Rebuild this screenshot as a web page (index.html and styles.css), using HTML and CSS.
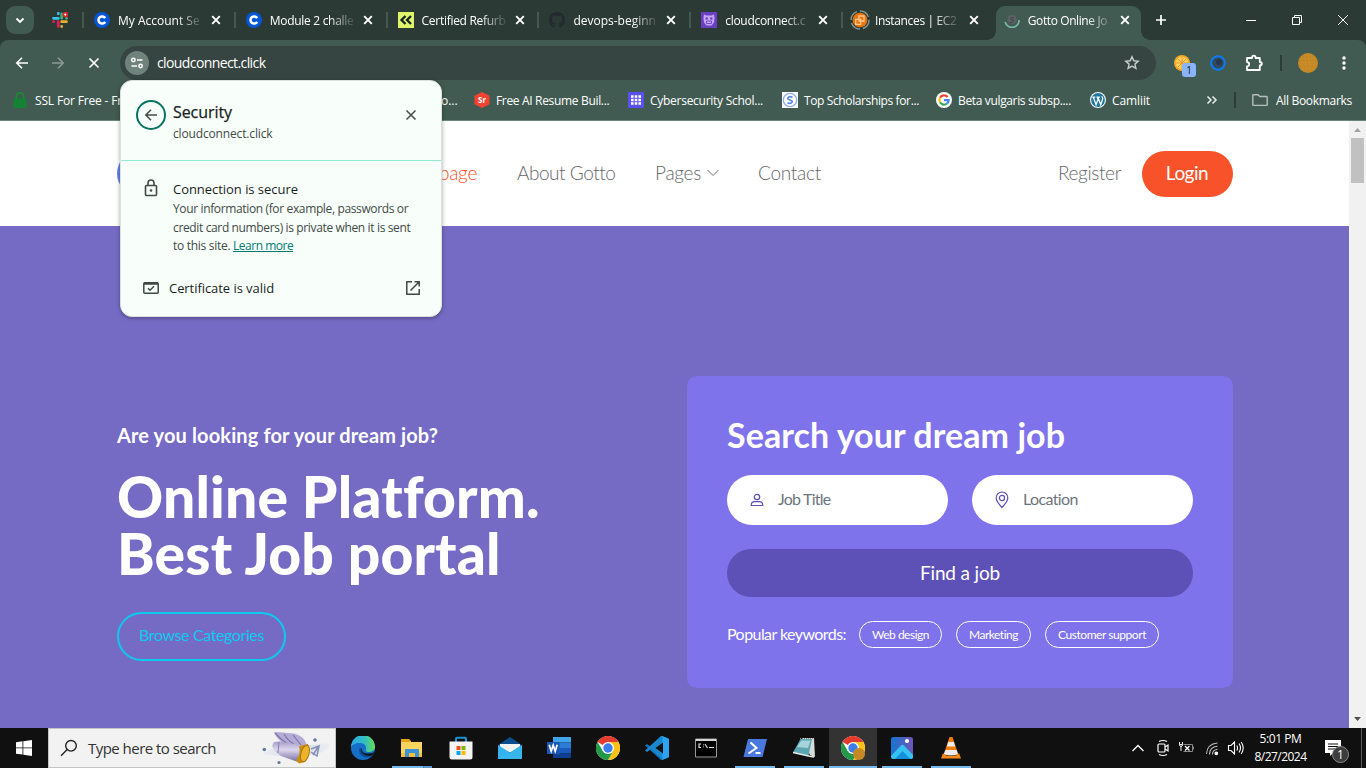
FILE: index.html
```html
<!DOCTYPE html>
<html lang="en">
<head>
<meta charset="utf-8">
<title>Gotto Online Job Portal</title>
<link rel="stylesheet" href="styles.css">
</head>
<body>
<svg class="defs" width="0" height="0">
  <defs>
    <symbol id="x" viewBox="0 0 12 12"><path d="M2.2 2.2l7.6 7.6M9.8 2.2L2.2 9.8" fill="none" stroke="currentColor" stroke-width="1.9"/></symbol>
    <symbol id="coursera" viewBox="0 0 16 16"><circle cx="8" cy="8" r="8" fill="#0556d6"/><path d="M11.2 6.2A3.6 3.6 0 1 0 11.2 9.8" fill="none" stroke="#fff" stroke-width="2.5"/></symbol>
    <symbol id="chrome" viewBox="0 0 24 24">
      <circle cx="12" cy="12" r="12" fill="#fff"/>
      <path d="M12 12L1.6 6A12 12 0 0 1 22.4 6z" fill="#e33b2e"/>
      <path d="M22.4 6A12 12 0 0 1 12 24L17.2 15 12 6z" fill="#fbc116"/>
      <path d="M1.6 6A12 12 0 0 0 12 24L17.2 15 6.8 15z" fill="#229a48"/>
      <circle cx="12" cy="12" r="6" fill="#fff"/><circle cx="12" cy="12" r="4.7" fill="#3b7ded"/>
    </symbol>
  </defs>
</svg>

<header class="tabstrip">
  <button class="tab-search"><svg width="12" height="12" viewBox="0 0 12 12"><path d="M2.5 4.5L6 8l3.500-3.500" fill="none" stroke="#fff" stroke-width="1.8"/></svg></button>
  <div class="pinned">
    <svg width="16" height="16" viewBox="0 0 16 16" fill="none" stroke-width="2.800" stroke-linecap="round">
      <path d="M6.300 1.500v.2M1.500 6.300h4.800" stroke="#36c5f0"/><path d="M9.700 2v4.200" stroke="#2eb67d"/><path d="M14.400 6.300h.1" stroke="#2eb67d"/>
      <path d="M9.700 9.700h4.700M9.700 14.400v.1" stroke="#ecb22e"/><path d="M6.300 9.700v4.700M1.500 9.700h.2" stroke="#e01e5a"/>
      <circle cx="13.300" cy="2.600" r="2" fill="#fff" stroke="#e0202a" stroke-width="1.800"/>
    </svg>
  </div>
  <div class="tab"><svg class="fav"><use href="#coursera"/></svg><span class="tab-title">My Account Se</span><svg class="close"><use href="#x"/></svg></div>
  <div class="tab"><svg class="fav"><use href="#coursera"/></svg><span class="tab-title t-mod">Module 2 challe</span><svg class="close"><use href="#x"/></svg></div>
  <div class="tab"><svg class="fav" viewBox="0 0 16 16"><path fill="#dff36b" d="M0 0h16v16H0z"/><path d="M7.500 4L3.500 8l4 4M13 4L9 8l4 4" fill="none" stroke="#17202b" stroke-width="2.300"/></svg><span class="tab-title tight">Certified Refurb</span><svg class="close"><use href="#x"/></svg></div>
  <div class="tab"><svg class="fav" viewBox="0 0 16 16"><path fill="#24292f" d="M8 0C3.580 0 0 3.580 0 8c0 3.540 2.290 6.530 5.470 7.590.4.070.55-.17.55-.38v-1.490c-2.010.37-2.530-.49-2.690-.94-.09-.23-.48-.94-.82-1.130-.28-.15-.68-.52-.01-.53.63-.01 1.080.58 1.230.82.72 1.210 1.870.87 2.330.66.07-.52.28-.87.51-1.070-1.780-.2-3.640-.89-3.640-3.950 0-.87.310-1.590.82-2.150-.08-.2-.36-1.020.08-2.120 0 0 .67-.21 2.200.82a7.400 7.400 0 0 1 4 0c1.530-1.040 2.200-.82 2.200-.82.44 1.100.16 1.920.08 2.120.51.56.82 1.270.82 2.150 0 3.070-1.870 3.750-3.650 3.950.29.25.54.73.54 1.480v2.200c0 .21.15.46.55.38A8 8 0 0 0 16 8c0-4.420-3.580-8-8-8z"/></svg><span class="tab-title">devops-beginn</span><svg class="close"><use href="#x"/></svg></div>
  <div class="tab"><svg class="fav" viewBox="0 0 16 16"><path fill="#6b3fc4" d="M0 0h16v16H0z"/><path fill="#c5a6f5" d="M3 2.500l2.500 1h5l2.500-1 .5 3.500-.5 4.500-2.500 3h-5l-2.500-3L2.500 6z"/><circle cx="5.700" cy="6.500" r="1.200" fill="#6b3fc4"/><circle cx="10.300" cy="6.500" r="1.200" fill="#6b3fc4"/><path d="M5.500 9h5v2.500h-5z" fill="none" stroke="#6b3fc4" stroke-width=".9"/></svg><span class="tab-title tight">cloudconnect.c</span><svg class="close"><use href="#x"/></svg></div>
  <div class="tab"><svg class="fav big" viewBox="0 0 20 20"><circle cx="10" cy="10" r="9" fill="none" stroke="#8b9892" stroke-width="1.400" stroke-dasharray="11 3"/><circle cx="10" cy="10" r="7.300" fill="#e8760c"/><path d="M5.700 9.300h5v5h-5zM9 6h5v5H9z" fill="none" stroke="#ffc68f" stroke-width="1.300"/></svg><span class="tab-title t-ec2">Instances | EC2</span><svg class="close"><use href="#x"/></svg></div>
  <div class="tab active"><svg class="fav" viewBox="0 0 16 16"><circle cx="8" cy="7.500" r="4.500" fill="#5b6262"/><path d="M10 6q-2-1.500-3 0t1 1.500 1 2-3 .5" fill="none" stroke="#3b4446"/><path d="M15 8A7 7 0 0 1 1.200 10" fill="none" stroke="#79b8a6" stroke-width="1.700"/></svg><span class="tab-title t-gotto">Gotto Online Jo</span><svg class="close"><use href="#x"/></svg></div>
  <svg class="newtab" viewBox="0 0 12 12"><path d="M6 1v10M1 6h10" stroke="#fff" stroke-width="1.700"/></svg>
  <div class="winctl">
    <svg width="12" height="12" viewBox="0 0 12 12"><path d="M1 6.500h10" stroke="#fff"/></svg>
    <svg width="12" height="12" viewBox="0 0 12 12"><path d="M1.500 3.500h7v7h-7zM3.500 3.500v-2h7v7h-2" fill="none" stroke="#fff"/></svg>
    <svg width="12" height="12" viewBox="0 0 12 12"><path d="M1 1l10 10M11 1L1 11" stroke="#fff"/></svg>
  </div>
</header>

<div class="toolbar">
  <div class="navbtns">
    <svg width="16" height="16" viewBox="0 0 16 16"><path d="M14 8H3M8 2.800L2.800 8 8 13.200" fill="none" stroke="#fff" stroke-width="1.600"/></svg>
    <svg width="16" height="16" viewBox="0 0 16 16"><path d="M2 8h11M8 2.800L13.200 8 8 13.200" fill="none" stroke="#8b9a94" stroke-width="1.600"/></svg>
    <svg width="16" height="16" viewBox="0 0 16 16"><path d="M3.500 3.500l9 9M12.500 3.500l-9 9" stroke="#fff" stroke-width="1.700"/></svg>
  </div>
  <div class="omnibox">
    <span class="siteinfo"><svg width="14" height="14" viewBox="0 0 14 14" fill="none" stroke="#fff" stroke-width="1.500"><circle cx="3.400" cy="4" r="1.700"/><path d="M7 4h5.500M1.500 10H7"/><circle cx="10.600" cy="10" r="1.700"/></svg></span>
    <span class="url">cloudconnect.click</span>
    <svg class="star" viewBox="0 0 16 16"><path d="M8 1.800l1.800 4 4.400.4-3.300 2.900 1 4.300L8 11.100l-3.900 2.300 1-4.300-3.300-2.900 4.400-.4z" fill="none" stroke="#c5cfcb" stroke-width="1.400"/></svg>
  </div>
  <div class="exts">
    <span class="ext-orange">
      <svg width="16" height="16" viewBox="0 0 16 16"><circle cx="8" cy="8" r="8" fill="#f5a623"/><circle cx="8" cy="8" r="6.300" fill="#ffd35c"/><path d="M8 2v12M2 8h12M3.700 3.700l8.600 8.600M12.300 3.700l-8.600 8.600" stroke="#f0972a"/></svg>
      <b class="badge">1</b>
    </span>
    <svg width="16" height="16" viewBox="0 0 16 16"><circle cx="8" cy="8" r="6.800" fill="#34495f" stroke="#0a7cf2" stroke-width="2"/><circle cx="9" cy="7" r="3" fill="#26384b"/></svg>
    <svg width="18" height="18" viewBox="0 0 18 18"><path d="M2 4h5q0-2.300 1.800-2.300T10.600 4h4.200v4q2 .1 2 1.700t-2 1.700V16H2v-3.500q2.200-.3 2.200-2.200T2 8z" fill="none" stroke="#fff" stroke-width="1.800" stroke-linejoin="round"/></svg>
    <i class="sep"></i>
    <svg class="avatar" viewBox="0 0 20 20"><circle cx="10" cy="10" r="10" fill="#c58926"/><path d="M4 6h12M2 9h15M3 12h14M5 15h10" stroke="#d2962f" stroke-dasharray="1 2"/><path d="M4 4.500h11M1 7.500h17M2 13.500h15" stroke="#b57d22" stroke-dasharray="1 3"/></svg>
    <svg width="4" height="16" viewBox="0 0 4 16" fill="#fff"><circle cx="2" cy="3" r="1.700"/><circle cx="2" cy="8" r="1.700"/><circle cx="2" cy="13" r="1.700"/></svg>
  </div>
</div>

<div class="bookmarks">
  <span class="bm bm-ssl"><svg viewBox="0 0 14 16"><path d="M3.300 7V4.500a3.700 3.700 0 0 1 7.400 0V7" fill="none" stroke="#1a8a34" stroke-width="1.800"/><rect x=".6" y="6.500" width="12.800" height="9.500" rx="1.200" fill="#148233"/></svg><span>SSL For Free - Fre</span></span>
  <span class="bm-tail">o...</span>
  <span class="bm bm-resume"><svg viewBox="0 0 16 16"><path d="M8 0l7.500 3.800v8.400L8 16 .5 12.200V3.800z" fill="#f1432f"/><text x="8" y="10.500" class="g-sr">Sr</text></svg><span>Free AI Resume Buil...</span></span>
  <span class="bm bm-cyber"><svg viewBox="0 0 16 16"><path fill="#5a4ff3" d="M0 0h16v16H0z"/><path d="M3 4.500h10M3 8h10M3 11.500h10" stroke="#fff" stroke-width="2.600" stroke-dasharray="2.600 1.100"/></svg><span>Cybersecurity Schol...</span></span>
  <span class="bm bm-top"><svg viewBox="0 0 16 16"><path fill="#fff" d="M0 0h16v16H0z"/><circle cx="8" cy="8" r="6.700" fill="none" stroke="#8fadf0" stroke-width="1.300"/><path d="M10.500 5.500Q8 3.800 6.300 5.300T8 8t1.700 2.600-4.200.2" fill="none" stroke="#5b86e8" stroke-width="1.700"/></svg><span>Top Scholarships for...</span></span>
  <span class="bm bm-beta"><svg viewBox="0 0 16 16"><circle cx="8" cy="8" r="8" fill="#fff"/><g fill="none" stroke-width="2.200"><path d="M11.600 5A4.600 4.600 0 0 0 4 5.700" stroke="#ea4335"/><path d="M4 5.700a4.600 4.600 0 0 0 0 4.600" stroke="#fbbc05"/><path d="M4 10.300a4.600 4.600 0 0 0 7 1.200" stroke="#34a853"/><path d="M11 11.500a4.600 4.600 0 0 0 1.600-3.300H8" stroke="#4285f4"/></g></svg><span>Beta vulgaris subsp....</span></span>
  <span class="bm bm-caml"><svg viewBox="0 0 16 16"><circle cx="8" cy="8" r="8" fill="#f4fafd"/><circle cx="8" cy="8" r="6.900" fill="#21759b"/><path d="M2.300 5.200h3M6.500 5.200h3.500M3.300 5.200l2.800 7.600L8 7.300 7.300 5.200M8 5.200l2.700 7.600 2-6q.2-1.500-1-2.600" fill="none" stroke="#fff" stroke-width="1.200"/></svg><span>Camliit</span></span>
  <svg class="more" viewBox="0 0 12 12"><path d="M1.500 2.500L5 6 1.500 9.500M6.500 2.500L10 6 6.500 9.500" fill="none" stroke="#e8efec" stroke-width="1.500"/></svg>
  <i class="sep bm-sep"></i>
  <span class="bm bm-all"><svg viewBox="0 0 16 16"><path d="M.8 12.800V3.300q0-.6.600-.6h4.800l1.600 1.800h6.800q.6 0 .6.600v7.700q0 .6-.6.600H1.400q-.6 0-.6-.6z" fill="none" stroke="#b4bfba" stroke-width="1.400"/></svg><span>All Bookmarks</span></span>
</div>

<main class="viewport">
  <div class="site">
    <nav class="sitenav">
      <i class="logo"></i>
      <span class="home">Homepage</span>
      <span class="n-about">About Gotto</span>
      <span class="n-pages">Pages<svg width="14" height="10" viewBox="0 0 14 10"><path d="M1.500 2L7 7.500 12.500 2" fill="none" stroke="#717275" stroke-width="1"/></svg></span>
      <span class="n-contact">Contact</span>
      <span class="register">Register</span>
      <span class="login">Login</span>
    </nav>
    <section class="hero">
      <div class="intro">
        <h6>Are you looking for your dream job?</h6>
        <h1><span>Online Platform.</span><br><span>Best Job portal</span></h1>
        <span class="browse">Browse Categories</span>
      </div>
      <form class="card">
        <h2>Search your dream job</h2>
        <div class="fields">
          <div class="field"><svg width="14" height="16" viewBox="0 0 14 16" fill="none" stroke="#5b4fb8" stroke-width="1.200"><circle cx="7" cy="5" r="2.700"/><path d="M1.200 13.500q0-3.800 3.600-3.800h4.400q3.600 0 3.600 3.800z"/></svg><span class="f-job">Job Title</span></div>
          <div class="field"><svg width="14" height="18" viewBox="0 0 14 18" fill="none" stroke="#5b4fb8" stroke-width="1.200"><path d="M7 16.500Q1.200 10.500 1.200 6.800a5.800 5.800 0 0 1 11.600 0Q12.800 10.500 7 16.500z"/><circle cx="7" cy="7" r="2.600"/></svg><span class="f-loc">Location</span></div>
        </div>
        <div class="find">Find a job</div>
        <div class="keywords"><span class="kw">Popular keywords:</span><span class="chip c1">Web design</span><span class="chip c2">Marketing</span><span class="chip c3">Customer support</span></div>
      </form>
    </section>
  </div>
  <div class="scrollbar">
    <svg width="17" height="17" viewBox="0 0 17 17"><path d="M5 11h7L8.500 7z" fill="#a3a3a3"/></svg>
    <i class="thumb"></i>
    <svg class="down" width="17" height="17" viewBox="0 0 17 17"><path d="M5 6h7l-3.500 4z" fill="#505050"/></svg>
  </div>
</main>

<footer class="taskbar">
  <span class="start"><svg width="16" height="16" viewBox="0 0 16 16" fill="#fff"><path d="M0 2.200L6.500 1.300V7.500H0zM7.300 1.200L16 0v7.500H7.300zM0 8.300h6.500v6.300L0 13.800zM7.300 8.300H16V16l-8.700-1.200z"/></svg></span>
  <div class="search">
    <svg width="18" height="18" viewBox="0 0 18 18" fill="none" stroke="#222" stroke-width="1.400"><circle cx="11" cy="6.800" r="5.300"/><path d="M7.200 10.600L1 16.800"/></svg>
    <span>Type here to search</span>
    <svg class="scope" width="72" height="38" viewBox="0 0 72 38">
      <defs>
        <linearGradient id="tube" x1="0" y1="0" x2="0" y2="1"><stop offset="0" stop-color="#a79dcb"/><stop offset=".4" stop-color="#dcd6ee"/><stop offset="1" stop-color="#776c9f"/></linearGradient>
        <linearGradient id="haze" x1="0" x2="1"><stop offset="0" stop-color="#d3e1ef" stop-opacity=".2"/><stop offset=".5" stop-color="#c3d6ea"/><stop offset="1" stop-color="#d3e1ef" stop-opacity=".2"/></linearGradient>
      </defs>
      <path d="M0 25q14-10 30-7l38-4q-2 11-22 12L18 27z" fill="url(#haze)"/>
      <path d="M12 3q7 0 13 1 9 0 13 3 6 3 7 11l-7 1-15-4Q15 11 12 3z" fill="#b5acd6"/><path d="M13 4q6 7 13 11M22 5q4 7 10 10M31 6q4 5 8 10" fill="none" stroke="#7d73ab" stroke-width="1.200"/>
      <path d="M10 17l2-4 5-.5 22 3.500-3 17-17-6-6-5z" fill="url(#tube)"/><path d="M17 13l-1 11" stroke="#8a80b3"/>
      <path d="M37 17l9-2q4 7-3 18l-6 1.500-3-3q5-6 3-14.500z" fill="#c98f12"/><ellipse cx="43" cy="24.500" rx="4" ry="8.500" transform="rotate(16 43 24.500)" fill="#edb42a" stroke="#a8740d"/>
      <path d="M49 20l8-3-2 10-6-4M51 26l5-8" fill="none" stroke="#8590b2" stroke-width="1.500"/>
      <g fill="#62789a"><circle cx="2.300" cy="20.500" r="1.800"/><circle cx="17" cy="33.500" r="1.600"/><circle cx="53" cy="11" r="1.800"/></g>
    </svg>
  </div>
  <div class="apps">
    <span class="app"><svg viewBox="0 0 24 24"><defs><linearGradient id="e1" x1="0" x2="1"><stop offset="0" stop-color="#2aa7ee"/><stop offset=".6" stop-color="#35c1b8"/><stop offset="1" stop-color="#67dc55"/></linearGradient></defs><circle cx="12" cy="12" r="12" fill="#1470c8"/><path d="M0 11A12 12 0 0 1 24 11c0 5-8 6.500-9.500 3.500 2-4-1-7.500-5.500-7.500C4 7 1 9 0 11z" fill="url(#e1)"/><path d="M8.500 12.500q-1.500 5 3.500 8t10-2.500q-4 2-8 0t-3.500-6z" fill="#0b4b91"/><path d="M10.500 12q0 5 5 5.500 5 .5 8-1.500l-2.500 3.500q-6 1-9-2t-1.500-5.500z" fill="#101010"/></svg></span>
    <span class="app open double"><svg viewBox="0 0 24 24"><path d="M1 3h8l2 2v3H1z" fill="#e8a41d"/><path d="M1 6h21v14H1z" fill="#ffd45f"/><path d="M1 17h21v4H1z" fill="#f7bd3a"/><path d="M5 13h14v8h-4v-4H9v4H5z" fill="#3a93d5"/></svg></span>
    <span class="app"><svg viewBox="0 0 24 24"><path d="M7 6V2.800q0-1 1-1h8q1 0 1 1V6" fill="none" stroke="#1795d4" stroke-width="2"/><path d="M.5 5.500h23V21q0 2.500-2.500 2.500H3Q.5 23.500.5 21z" fill="#f4f4f4"/><path d="M7.500 10h4v4h-4z" fill="#f25022"/><path d="M12.500 10h4v4h-4z" fill="#7fba00"/><path d="M7.500 15h4v4h-4z" fill="#00a4ef"/><path d="M12.500 15h4v4h-4z" fill="#ffb900"/></svg></span>
    <span class="app"><svg viewBox="0 0 24 24"><path d="M0 9l12-8 12 8v3H0z" fill="#0b4d8e"/><path d="M2 8h20v8H2z" fill="#f2f2f2"/><path d="M0 9l12 7.500L24 9v14H0z" fill="#35b3ee"/><path d="M24 9v14H2z" fill="#2a9de0"/><path d="M0 23L12 16.500 24 9v14z" fill="#41c4f5" opacity=".6"/></svg></span>
    <span class="app"><svg viewBox="0 0 24 24"><path d="M6 1h18v5.500H6z" fill="#41a5ee"/><path d="M6 6.500h18V12H6z" fill="#2b7cd3"/><path d="M6 12h18v5.500H6z" fill="#185abd"/><path d="M6 17.500h18V22H6z" fill="#103f91"/><path d="M0 6h12.500v12H0z" fill="#1d57b5"/><path d="M2.200 8.700l2 6.500 2-6 2 6 2-6.500" fill="none" stroke="#fff" stroke-width="1.700"/></svg></span>
    <span class="app"><svg><use href="#chrome"/></svg></span>
    <span class="app"><svg viewBox="0 0 24 24"><path d="M18 0L6 11 2 8 0 9.500 16 24h2z" fill="#1173b8"/><path d="M18 24L6 13l-4 3-2-1.500L16 0h2z" fill="#1a88cf"/><path d="M17.500 0L24 2.800v18.400L17.500 24z" fill="#2ba3f0"/><path d="M18 6.500v11L10.500 12z" fill="#101010"/></svg></span>
    <span class="app"><svg viewBox="0 0 24 24"><path d="M1.500 3h21v18h-21z" fill="#000" stroke="#9a9a9a"/><path d="M2 3h20v2H2z" fill="#d5d5d5"/><path d="M7 8H5v3.500h2M9.500 8.500v.8M9.500 10.500v.8M11 8l2.500 4M15 11.500h5" fill="none" stroke="#e8e8e8" stroke-width="1.100"/></svg></span>
    <span class="app open"><svg viewBox="0 0 24 24"><path d="M5 3h19l-4.500 18H.5z" fill="#4a78dc"/><path d="M7.500 6.500l6 5.500-8 5.500M12.500 17h5" fill="none" stroke="#fff" stroke-width="2"/></svg></span>
    <span class="app open"><svg viewBox="0 0 24 24"><path d="M10 2h12l1 19-5-2z" fill="#d8dcd6"/><path d="M8.500 3H20l-3.500 17L1 16.500z" fill="#5ba6b3"/><path d="M9.500 4.500h9L16 12 5 11z" fill="#a7d4da"/><path d="M1 16.500L16.500 20l5.500 1" fill="none" stroke="#e6ebe8" stroke-width="1.500"/><path d="M8 2.500h14" stroke="#8e8e82" stroke-dasharray="1 1"/></svg></span>
    <span class="app open current"><svg><use href="#chrome"/></svg><i class="profile"></i></span>
    <span class="app open"><svg viewBox="0 0 24 24"><defs><linearGradient id="ph" x1="0" x2="1"><stop offset="0" stop-color="#1675d1"/><stop offset="1" stop-color="#6f55b7"/></linearGradient></defs><rect x="1" y="1" width="22" height="22" rx="2.500" fill="url(#ph)"/><path d="M1 20L11 9.500q1.500-1.500 3 0l9 9.500V21q0 2-2 2H3.500Q1 23 1 20z" fill="#36c3f2"/><path d="M12.500 15l8 8H5z" fill="#1491de"/><circle cx="17" cy="5" r="2" fill="#fff"/></svg></span>
    <span class="app open"><svg viewBox="0 0 24 24"><path d="M10.500 1h3l6 18h-15z" fill="#f27c0a"/><path d="M9.200 6h5.600l1.400 4.500H7.800zM6.400 14h11.200l1.300 4q-7 3-14 0z" fill="#ededed"/><path d="M4 17l-2 5.500h20L20 17q-1 3-8 3t-8-3z" fill="#f58a18"/></svg></span>
  </div>
  <div class="tray">
    <svg width="14" height="10" viewBox="0 0 14 10"><path d="M1.500 8L7 2.500 12.500 8" fill="none" stroke="#fff" stroke-width="1.300"/></svg>
    <svg class="t-meet" width="14" height="18" viewBox="0 0 14 18" fill="none" stroke="#fff" stroke-width="1.200"><rect x="2" y="5" width="7" height="8" rx="1"/><path d="M9 8l3-2v6L9 10M3 2.500Q7 .5 11 2.500M3 15.500q4 2 8 0"/></svg>
    <svg class="t-bat" width="17" height="14" viewBox="0 0 17 14" fill="none" stroke="#eee"><path d="M1.500 1v2.500h3V1M1.500 3.500q0 2 1.500 2t1.500-2M3 5.500V10"/><path d="M5.500 3.500h9v7h-9M15.500 5.500v3" stroke="#888"/><path d="M7 5l4.500 4.500M11.500 5L7 9.500" stroke="#fff" stroke-width="1.300"/></svg>
    <svg class="t-wifi" width="15" height="15" viewBox="0 0 15 15" fill="none" stroke="#bbb" stroke-width="1.100"><path d="M1.500 13Q2 3 12.500 2M4.500 13.500Q4.500 6 12.500 5.300M7.500 13.500q0-4.500 5-5.200"/><circle cx="11.300" cy="12.300" r="1.300" fill="#fff" stroke="#fff"/></svg>
    <svg class="t-vol" width="18" height="16" viewBox="0 0 18 16" fill="none" stroke="#fff" stroke-width="1.100"><path d="M1.500 5.500H4L7.500 2v12L4 10.500H1.500zM9.800 5.500q1.500 2.500 0 5M12 3.500q3 4.500 0 9M14.200 2q4 6 0 12"/></svg>
    <div class="clock"><span class="c-time">5:01 PM</span><span class="c-date">8/27/2024</span></div>
    <span class="notif"><svg width="16" height="16" viewBox="0 0 16 16"><path d="M0 0h16v13H8l-3 3v-3H0z" fill="#fff"/><path d="M3 4h10M3 6.500h10M3 9h7" stroke="#111" stroke-width="1.100"/></svg><b>1</b></span>
    <i class="peek"></i>
  </div>
</footer>

<aside class="popup">
  <div class="p-head">
    <span class="p-back"><svg width="14" height="14" viewBox="0 0 14 14"><path d="M13 7H2M7 1.800L1.800 7 7 12.200" fill="none" stroke="#444b48" stroke-width="1.500"/></svg></span>
    <div class="p-titles"><span class="p-title">Security</span><span class="p-host">cloudconnect.click</span></div>
    <svg class="p-x" viewBox="0 0 12 12"><path d="M1.500 1.500l9 9M10.500 1.500l-9 9" stroke="#444b48" stroke-width="1.500"/></svg>
  </div>
  <div class="p-body">
    <svg class="p-lock" width="14" height="18" viewBox="0 0 14 18" fill="none" stroke="#3f4845" stroke-width="1.600"><rect x="1.500" y="6.500" width="11" height="10" rx="1"/><path d="M4 6.500V4a3 3 0 0 1 6 0v2.500"/><circle cx="7" cy="11.500" r="1.300" fill="#3f4845" stroke="none"/></svg>
    <div class="p-text"><span class="p-conn">Connection is secure</span><span>Your information (for example, passwords or</span><span>credit card numbers) is private when it is sent</span><span class="p-last">to this site. <a>Learn more</a></span></div>
  </div>
  <div class="p-cert">
    <svg width="16" height="14" viewBox="0 0 16 14" fill="none" stroke="#3f4845" stroke-width="1.500"><rect x=".8" y="1.800" width="14.400" height="10.500" rx="1"/><path d="M1 2.500h14" stroke-width="2.500"/><path d="M5 7.300l2 2 4-4"/></svg>
    <span>Certificate is valid</span>
    <svg class="p-out" width="16" height="16" viewBox="0 0 16 16" fill="none" stroke="#3f4845" stroke-width="1.500"><path d="M7 1.800H1.800v12.400h12.400V9M9.500 1.800h4.700v4.700M14 2L5.500 10.500"/></svg>
  </div>
</aside>
</body>
</html>
```
FILE: styles.css
```css
* { box-sizing: border-box; }
html, body { height: 100%; }
body {
  margin: 0; width: 1366px; height: 768px; overflow: hidden;
  display: flex; flex-direction: column;
  font-family: "Open Sans", "Noto Sans", sans-serif; font-size: 12px; color: #fff;
  background: #2b3a35; position: relative; white-space: nowrap;
}
svg { flex: none; display: block; }
.defs { position: absolute; }
h1, h2, h6 { margin: 0; }

/* tab strip */
.tabstrip { height: 40px; display: flex; align-items: center; padding-left: 6px; flex: none; }
.tab-search { width: 28px; height: 28px; border: 0; padding: 0; border-radius: 9px; background: #425b52; display: flex; align-items: center; justify-content: center; }
.pinned { width: 48px; padding-left: 18px; }
.tab { width: 151.8px; height: 34px; display: flex; align-items: center; padding-left: 10px; position: relative; }
.tab::before { content: ""; width: 2px; height: 16px; background: #43594f; margin-left: -10px; margin-right: 10px; }
.fav { width: 16px; height: 16px; margin-right: 8px; }
.tab-title { width: 84px; -webkit-mask-image: linear-gradient(90deg, #000 70%, rgba(0,0,0,.15) 98%); mask-image: linear-gradient(90deg, #000 70%, rgba(0,0,0,.15) 98%); }
.tab-title.tight { letter-spacing: -.29px; }
.tab-title.t-mod { letter-spacing: -.3px; }
.tab-title.t-ec2 { letter-spacing: -.35px; }
.tab-title.t-gotto { letter-spacing: -.4px; }
.close { width: 12px; height: 12px; margin-left: 8px; color: #fff; }
.fav.big { width: 20px; height: 20px; margin: 0 5px 0 -3px; }
.tab.active { width: 145px; height: 34px; margin: 6px 0 0 3px; padding: 0 0 6px 8px; background: #425b52; border-radius: 9px 9px 0 0; }
.fav.big ~ .close { margin-left: 9px; }
.tab.active::before { display: none; }
.tab.active .close { margin-left: 7px; }
.tab.active::after {
  content: ""; position: absolute; left: -9px; right: -9px; bottom: 0; height: 9px;
  background:
    radial-gradient(circle at 0 0, transparent 8.5px, #425b52 9px) left / 9px 9px no-repeat,
    radial-gradient(circle at 100% 0, transparent 8.5px, #425b52 9px) right / 9px 9px no-repeat;
}
.newtab { width: 12px; height: 12px; margin-left: 14px; }
.winctl { margin-left: auto; padding-right: 17px; display: flex; gap: 34px; }

/* toolbar */
.toolbar { height: 40px; flex: none; background: #425b52; border-radius: 8px 8px 0 0; display: flex; align-items: center; }
.navbtns { width: 120px; display: flex; gap: 20px; padding: 6px 0 0 14px; }
.omnibox { width: 1036px; height: 34px; margin-top: 6px; border-radius: 17px; background: #364541; display: flex; align-items: center; padding: 0 16px 0 5px; }
.siteinfo { width: 24px; height: 24px; border-radius: 50%; background: #6f837c; display: flex; align-items: center; justify-content: center; }
.url { font-size: 14px; letter-spacing: -.6px; margin-left: 8px; padding-bottom: 1px; flex: 1; }
.star { width: 16px; height: 16px; }
.exts { display: flex; align-items: center; padding: 6px 0 0 18px; flex: 1; }
.ext-orange { position: relative; margin-right: 20px; }
.badge { position: absolute; left: 8px; top: 8px; width: 14px; height: 14px; border-radius: 3px; background: #8ab4f8; color: #202124; font-size: 10px; font-weight: 400; line-height: 14px; text-align: center; }
.exts > svg:nth-of-type(1) { margin-right: 19px; }
.sep { width: 2px; height: 16px; background: #2c3c37; }
.exts .sep { margin: 0 16px 0 17px; }
.exts .avatar { width: 20px; height: 20px; margin-right: 24px; }

/* bookmarks */
.bookmarks { height: 41px; flex: none; background: #425b52; border-bottom: 1px solid #6c8479; display: flex; align-items: center; padding-left: 13px; letter-spacing: -.33px; }
.bm { display: flex; align-items: center; gap: 6px; }
.bm svg { width: 16px; height: 16px; }
.bm-ssl { width: 428px; gap: 8px; letter-spacing: -.16px; }
.bm-ssl svg { width: 14px; }
.bm-tail { width: 33px; letter-spacing: 0; }
.bm-resume { width: 154px; }
.bm-cyber { width: 154px; letter-spacing: -.27px; }
.bm-top { width: 154px; letter-spacing: -.38px; }
.bm-beta { width: 154px; letter-spacing: -.35px; }
.bm-caml { width: 116px; letter-spacing: -.1px; }
.more { width: 12px; height: 12px; }
.bm-sep { margin: 0 16px; }
.bm-all { gap: 8px; letter-spacing: -.31px; }
.g-sr { font: 700 8px "Open Sans", sans-serif; fill: #fff; text-anchor: middle; letter-spacing: 0; }

/* page */
.viewport { height: 607px; display: flex; flex: none; }
.site { width: 1349px; font-family: Lato, sans-serif; }
.sitenav { height: 105px; background: #fff; color: #66676a; font-weight: 300; font-size: 19px; line-height: 24px; display: flex; align-items: center; padding: 0 116px 0 117px; }
.sitenav > span:not(.login) { padding-bottom: 2px; }
.logo { width: 45px; height: 45px; border-radius: 50%; background: linear-gradient(135deg, #5f86f2, #7a6be0); }
.home { width: 315px; text-align: right; color: #f65129; letter-spacing: -.3px; }
.n-about { width: 138px; margin-left: 40px; letter-spacing: -.45px; }
.n-pages { width: 103px; display: flex; align-items: center; gap: 5px; letter-spacing: -.28px; }
.n-contact { letter-spacing: -.25px; }
.register { margin-left: auto; margin-right: 21px; letter-spacing: -.37px; }
.login { width: 91px; height: 46px; border-radius: 23px; background: #f8522a; color: #fff; text-align: center; line-height: 44px; font-weight: 400; letter-spacing: -.5px; padding-right: 1px; }
.hero { height: 502px; background: #766bc4; display: flex; justify-content: space-between; padding: 150px 116px 0 117px; }
.intro { padding-top: 46px; }
h6 { font-size: 20px; line-height: 26px; letter-spacing: .13px; }
h1 { font-size: 57px; line-height: 57px; font-weight: 900; margin-top: 20px; letter-spacing: .15px; }
.browse { display: block; width: 169px; height: 49px; margin-top: 30px; border: 2px solid #0dcaf0; border-radius: 25px; color: #0dcaf0; font-size: 16px; line-height: 42px; text-align: center; letter-spacing: -.39px; }
.card { width: 546px; height: 312px; border-radius: 10px; background: #7f73eb; padding: 39px 40px; }
h2 { font-size: 34px; line-height: 40px; letter-spacing: .07px; }
.fields { display: flex; gap: 24px; margin-top: 20px; }
.field { width: 221px; height: 50px; border-radius: 25px; background: #fff; display: flex; align-items: center; gap: 14px; padding-left: 23px; color: #6c757d; font-size: 16px; }
.field span { padding-bottom: 3px; }
.f-job { letter-spacing: -.75px; }
.f-loc { letter-spacing: -.63px; }
.find { height: 48px; border-radius: 24px; margin-top: 24px; background: #5d51b8; text-align: center; font-size: 19px; line-height: 48px; letter-spacing: -.17px; }
.keywords { display: flex; align-items: center; margin-top: 24px; height: 27px; }
.kw { width: 132px; font-size: 16px; letter-spacing: -.56px; padding-bottom: 3px; }
.chip { height: 27px; border: 1px solid #fff; border-radius: 14px; font-size: 12px; line-height: 25px; text-align: center; margin-right: 14px; letter-spacing: -.5px; }
.c1 { width: 83px; }
.c2 { width: 75px; }
.c3 { width: 114px; letter-spacing: -.44px; }
.scrollbar { width: 17px; background: #f1f1f1; display: flex; flex-direction: column; align-items: center; }
.thumb { width: 13px; height: 45px; background: #c1c1c1; }
.down { margin-top: auto; }

/* taskbar */
.taskbar { height: 40px; background: #101010; display: flex; flex: none; }
.start { width: 48px; display: flex; align-items: center; justify-content: center; }
.search { width: 288px; background: #f2f2f2; border: 1px solid #c4c4c4; color: #333; display: flex; align-items: center; padding-left: 11px; font-size: 15px; letter-spacing: -.53px; }
.search span { width: 175px; margin-left: 10px; }
.scope { margin-left: -1px; }
.apps { display: flex; margin-left: 3px; }
.app { width: 48px; height: 40px; margin-right: 1px; display: flex; align-items: center; justify-content: center; position: relative; }
.app svg { width: 24px; height: 24px; }
.app.open::after { content: ""; position: absolute; left: 4px; width: 40px; bottom: 0; height: 2px; background: #76b9ed; }
.app.double::after { background: linear-gradient(90deg, #76b9ed 31px, #4b7fae 31px, #4b7fae 32px, #5f98c8 32px); }
.app.current { background: #333; }
.app.current::after { left: 0; width: 48px; }
.profile { position: absolute; left: 24px; top: 20px; width: 12px; height: 12px; border-radius: 50%; background: #c58926; }
.tray { margin-left: auto; display: flex; align-items: center; }
.t-meet { margin-left: 11px; }
.t-bat { margin-left: 8px; }
.t-wifi { margin-left: 10px; }
.t-vol { margin-left: 7px; }
.clock { width: 71px; display: flex; flex-direction: column; align-items: center; line-height: 18px; }
.c-time { letter-spacing: -.41px; }
.c-date { letter-spacing: -.54px; }
.notif { position: relative; width: 45px; }
.notif svg { margin-left: 9px; }
.notif b { position: absolute; left: 16px; top: 6px; width: 17px; height: 17px; border-radius: 50%; background: #3c3c3c; border: 1px solid #8b8b8b; font-size: 12px; font-weight: 400; line-height: 15px; text-align: center; }
.peek { width: 5px; height: 40px; border-left: 1px solid #5a5a5a; }

/* security popup */
.popup { position: absolute; left: 120px; top: 80px; width: 322px; height: 237px; border: 1px solid #d9e2dd; border-radius: 12px; background: #f8fffb; color: #191d1b; box-shadow: 0 1px 4px rgba(0,0,0,.35); }
.p-head { height: 80px; border-bottom: 1px solid #8ef0d3; display: flex; align-items: flex-start; padding: 19px 24px 0 15px; }
.p-back { width: 30px; height: 30px; border: 2px solid #087362; border-radius: 50%; display: flex; align-items: center; justify-content: center; }
.p-titles { display: flex; flex-direction: column; margin-left: 7px; flex: 1; }
.p-title { font-size: 16px; font-weight: 500; line-height: 25px; letter-spacing: -.07px; -webkit-text-stroke: .25px #191d1b; }
.p-host { line-height: 18px; color: #3f4945; letter-spacing: -.15px; }
.p-x { width: 12px; height: 12px; margin: 9px 0 0; }
.p-body { display: flex; padding: 18px 0 0 23px; }
.p-text { margin-left: 15px; display: flex; flex-direction: column; line-height: 19px; color: #3f4945; letter-spacing: -.36px; }
.p-conn { font-size: 13px; color: #191d1b; line-height: 20px; letter-spacing: -.04px; }
.p-last { letter-spacing: -.29px; margin-top: -1px; }
.p-text a { color: #007a70; text-decoration: underline; letter-spacing: -.5px; }
.p-cert { display: flex; align-items: center; margin-top: 24px; padding: 0 20px 0 22px; font-size: 13px; letter-spacing: -.06px; }
.p-cert span { margin-left: 10px; flex: 1; }
```
